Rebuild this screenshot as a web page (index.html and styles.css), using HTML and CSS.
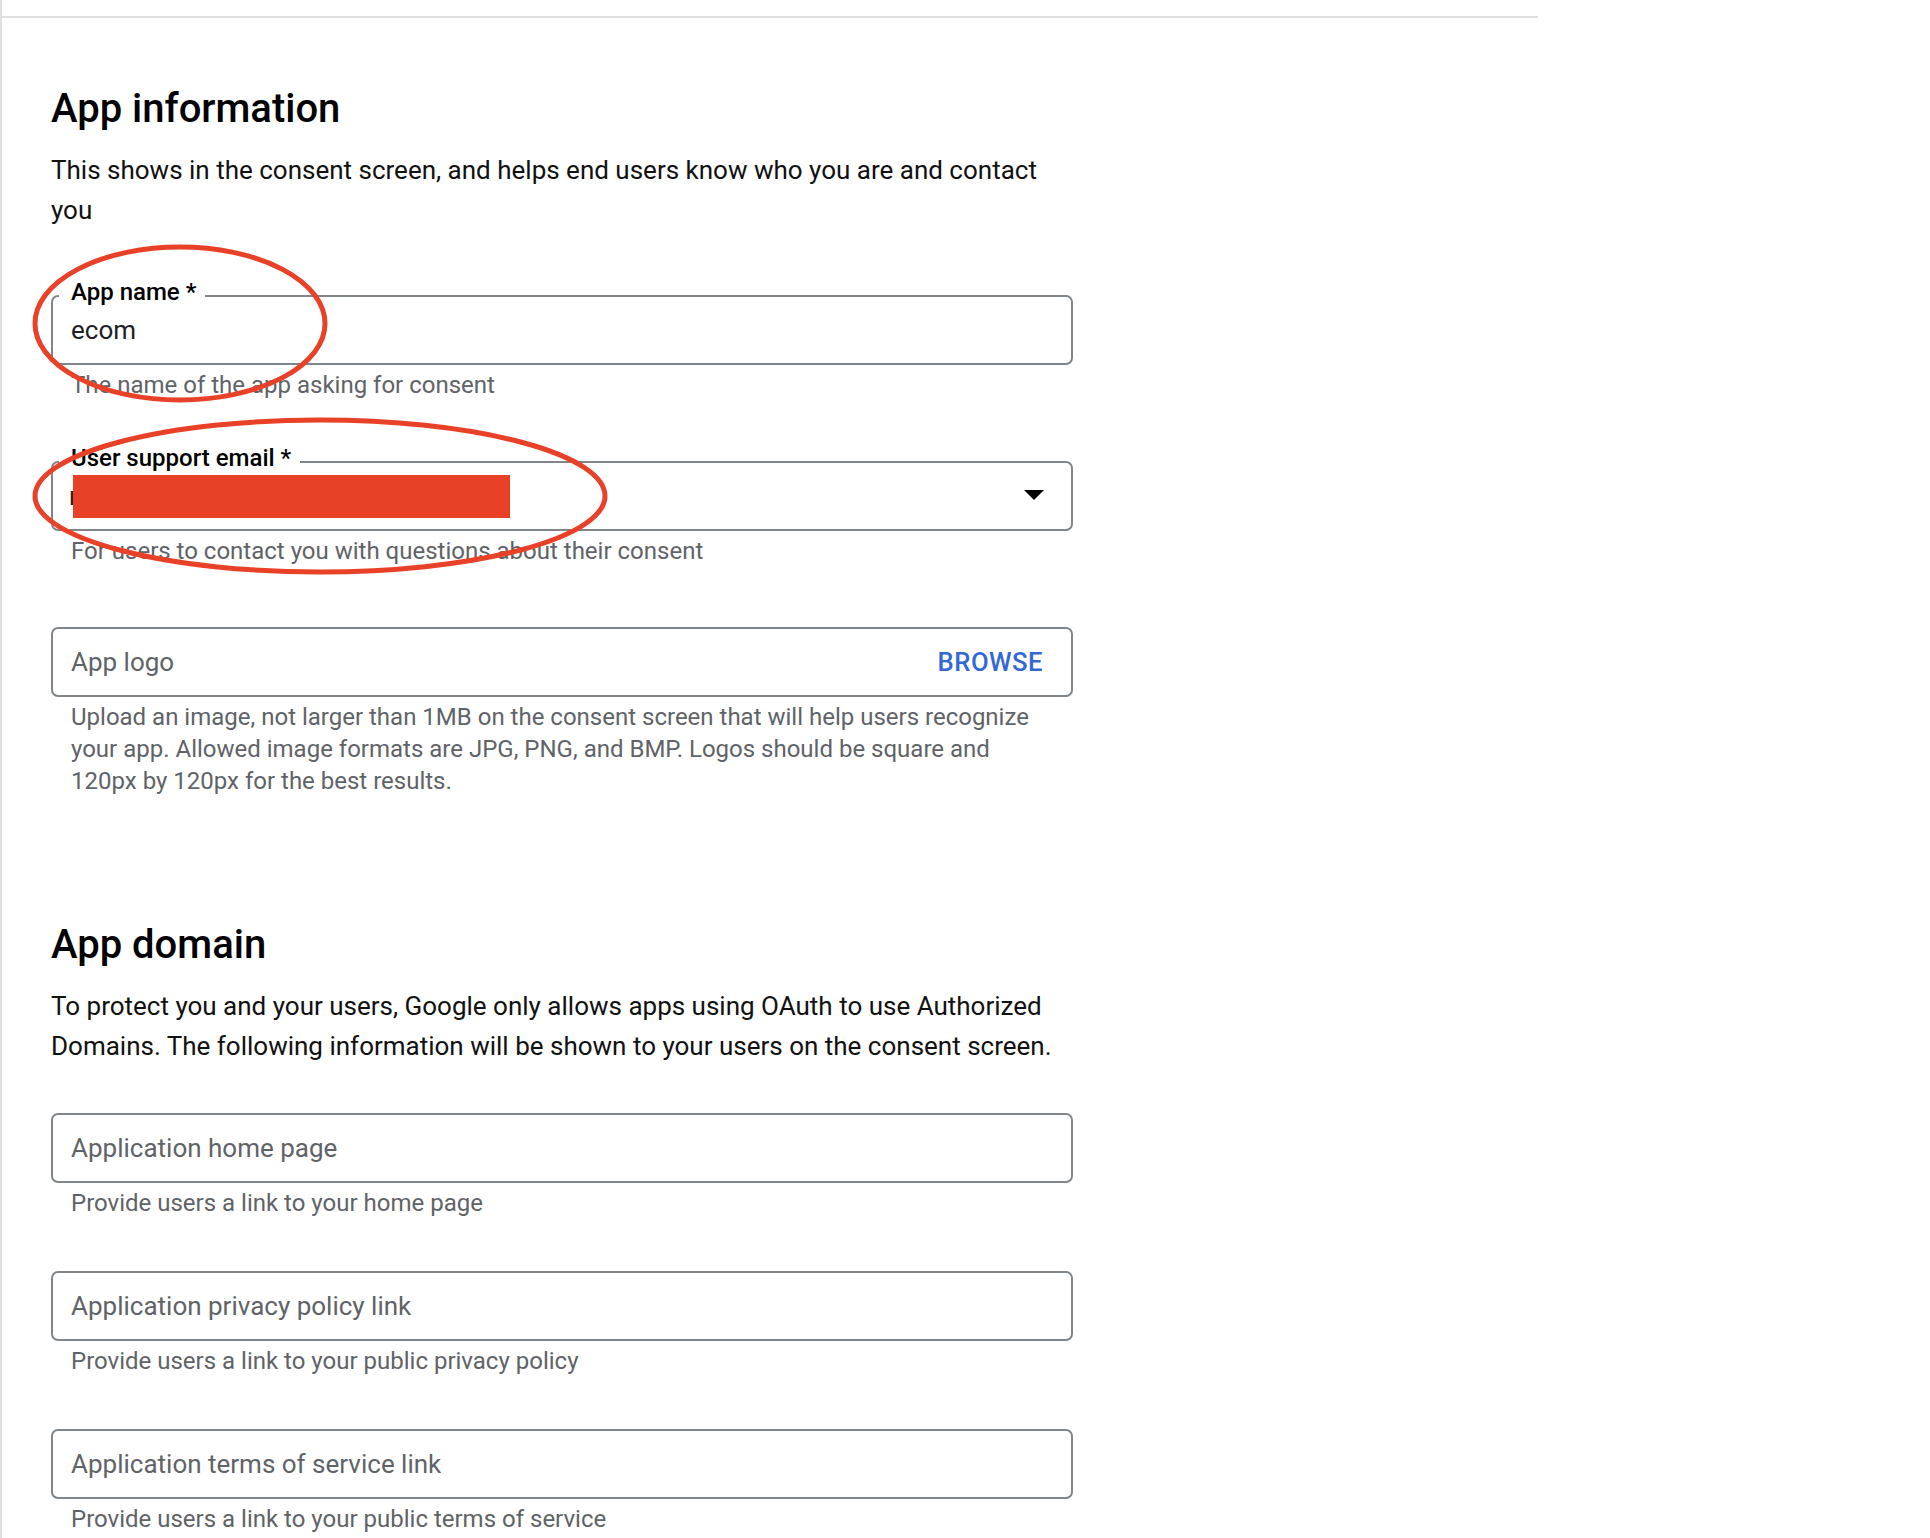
FILE: index.html
```html
<!DOCTYPE html>
<html lang="en">
<head>
<meta charset="utf-8">
<title>OAuth consent screen - App information</title>
<link rel="stylesheet" href="styles.css">
</head>
<body>
<div class="page">
  <div class="topbar"></div>
  <main class="content">
    <section class="section">
      <h2 class="title">App information</h2>
      <p class="desc">This shows in the consent screen, and helps end users know who you are and contact you</p>

      <div class="group group-first">
        <div class="field">
          <span class="float-label">App name *</span>
          <span class="value">ecom</span>
        </div>
        <div class="hint">The name of the app asking for consent</div>
      </div>

      <div class="group">
        <div class="field">
          <span class="float-label">User support email *</span>
          <span class="value value-email">n</span>
          <span class="redact"></span>
          <span class="arrow"></span>
        </div>
        <div class="hint">For users to contact you with questions about their consent</div>
      </div>

      <div class="group">
        <div class="field">
          <span class="placeholder">App logo</span>
          <span class="browse">BROWSE</span>
        </div>
        <div class="hint">Upload an image, not larger than 1MB on the consent screen that will help users recognize your app. Allowed image formats are JPG, PNG, and BMP. Logos should be square and 120px by 120px for the best results.</div>
      </div>
    </section>

    <section class="section section-domain">
      <h2 class="title">App domain</h2>
      <p class="desc">To protect you and your users, Google only allows apps using OAuth to use Authorized Domains. The following information will be shown to your users on the consent screen.</p>

      <div class="group group-first-plain">
        <div class="field">
          <span class="placeholder">Application home page</span>
        </div>
        <div class="hint">Provide users a link to your home page</div>
      </div>

      <div class="group group-tight">
        <div class="field">
          <span class="placeholder">Application privacy policy link</span>
        </div>
        <div class="hint">Provide users a link to your public privacy policy</div>
      </div>

      <div class="group group-tight">
        <div class="field">
          <span class="placeholder">Application terms of service link</span>
        </div>
        <div class="hint">Provide users a link to your public terms of service</div>
      </div>
    </section>
  </main>

  <svg class="annotations" width="1930" height="1538" viewBox="0 0 1930 1538" aria-hidden="true">
    <ellipse cx="180" cy="323.5" rx="145" ry="76.5" fill="none" stroke="#e94128" stroke-width="5"/>
    <ellipse cx="320" cy="496" rx="285" ry="76" fill="none" stroke="#e94128" stroke-width="5"/>
  </svg>
</div>
</body>
</html>
```

FILE: styles.css
```css
* {
  box-sizing: border-box;
}

html,
body {
  margin: 0;
  padding: 0;
  background: #ffffff;
}

body {
  font-family: Roboto, "Noto Sans", "Liberation Sans", Arial, sans-serif;
  color: #202124;
}

.page {
  position: relative;
  height: 1538px;
  border-left: 2px solid #e0e0e0;
  overflow: hidden;
}

.topbar {
  width: 1536px;
  height: 18px;
  border-bottom: 2px solid #e0e0e0;
}

.content {
  width: 1071px;
  padding-left: 49px;
}

.title {
  margin: 67px 0 0;
  font-size: 40px;
  line-height: 48px;
  font-weight: 500;
  color: #000000;
}

.section-domain .title {
  margin-top: 124px;
}

.desc {
  margin: 17px 0 0;
  font-size: 26px;
  line-height: 40px;
  font-weight: 400;
  color: #111111;
}

.group {
  margin-top: 60px;
}

.group-first {
  margin-top: 65px;
}

.group-first-plain {
  margin-top: 47px;
}

.group-tight {
  margin-top: 52px;
}

.field {
  position: relative;
  display: flex;
  align-items: center;
  height: 70px;
  padding: 0 28px 0 18px;
  border: 2px solid #80868b;
  border-radius: 7px;
  font-size: 26px;
}

.float-label {
  position: absolute;
  left: 6px;
  top: -17px;
  padding: 0 9px 0 12px;
  background: #ffffff;
  font-size: 24px;
  line-height: 24px;
  font-weight: 500;
  color: #000000;
  white-space: nowrap;
}

.value {
  color: #202124;
}

.value-email {
  margin-left: -2px;
}

.placeholder {
  color: #5f6368;
}

.redact {
  position: absolute;
  left: 20px;
  top: 12px;
  width: 437px;
  height: 43px;
  background: #e94128;
}

.arrow {
  margin-left: auto;
  margin-right: -1px;
  margin-top: -3px;
  width: 0;
  height: 0;
  border-left: 10px solid transparent;
  border-right: 10px solid transparent;
  border-top: 10px solid #000000;
}

.browse {
  margin-left: auto;
  font-size: 25.6px;
  font-weight: 500;
  letter-spacing: 0.5px;
  color: #3367d6;
}

.hint {
  margin: 4px 20px 0 20px;
  font-size: 24px;
  line-height: 32px;
  color: #5f6368;
}

.annotations {
  position: absolute;
  left: -2px;
  top: 0;
  pointer-events: none;
}
```
